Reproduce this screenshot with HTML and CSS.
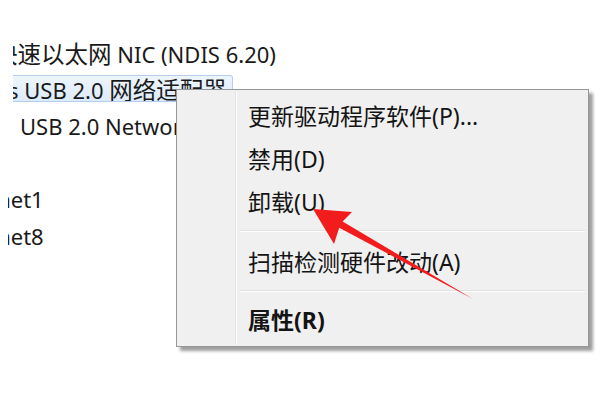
FILE: index.html
```html
<!DOCTYPE html>
<html lang="zh-CN">
<head>
<meta charset="utf-8">
<title>设备管理器</title>
<link rel="stylesheet" href="styles.css">
</head>
<body>
<div class="page">
  <div class="list">
    <div class="clip clip13">
      <div class="row"><span class="name shift1"><span class="cjk">快速以太网</span> NIC (NDIS 6.20)</span></div>
      <div class="row"><span class="sel"><span class="name shift2">s USB 2.0 <span class="cjk">网络适配器</span></span></span></div>
      <div class="row"><span class="name indent3">USB 2.0 Network Adapter</span></div>
      <div class="row"></div>
    </div>
    <div class="clip clip8">
      <div class="row"><span class="name shift5">VMnet1</span></div>
      <div class="row"><span class="name shift5">VMnet8</span></div>
    </div>
  </div>

  <div class="menu">
    <div class="gutter"></div>
    <div class="items">
      <div class="item">更新驱动程序软件(P)...</div>
      <div class="item">禁用(D)</div>
      <div class="item">卸载(U)</div>
      <div class="sep"></div>
      <div class="item">扫描检测硬件改动(A)</div>
      <div class="sep"></div>
      <div class="item item-last bold">属性(R)</div>
    </div>
  </div>

  <svg class="arrow" width="600" height="404" viewBox="0 0 600 404">
    <polygon points="313,209 352,212 342.6,221.5 473,299 339.2,227.7 334,244" fill="#f21c1c"/>
  </svg>
</div>
</body>
</html>
```

FILE: styles.css
```css
html, body {
  margin: 0;
  padding: 0;
  background: #ffffff;
}

.page {
  position: relative;
  width: 600px;
  height: 404px;
  overflow: hidden;
  background: #ffffff;
  font-family: "Noto Sans", "Noto Sans CJK SC", sans-serif;
  color: #1a1a1a;
}

.list {
  padding-top: 35px;
  display: flex;
  flex-direction: column;
}

.clip {
  overflow: hidden;
  display: flex;
  flex-direction: column;
}

.clip13 {
  margin-left: 13px;
}

.clip8 {
  margin-left: 8px;
}

.row {
  height: 36.5px;
  display: flex;
  align-items: center;
  font-size: 22px;
  white-space: nowrap;
}

.name {
  white-space: nowrap;
}

.cjk {
  font-size: 23.5px;
}

.shift1 {
  margin-left: -19px;
}

.shift2 {
  margin-left: -5px;
}

.indent3 {
  margin-left: 7px;
}

.shift5 {
  margin-left: -44px;
}

.sel {
  display: flex;
  align-items: center;
  box-sizing: border-box;
  height: 27px;
  width: 220px;
  margin-top: -2px;
  overflow: hidden;
  background: linear-gradient(#eef5fd, #dcebfb);
  border: 1px solid #b4cfee;
  border-left: none;
  border-radius: 0 3px 3px 0;
}

.menu {
  position: absolute;
  left: 176px;
  top: 89px;
  width: 413px;
  height: 258px;
  box-sizing: border-box;
  background: #f0f0f0;
  border: 1px solid #979797;
  box-shadow: 4px 4px 3px rgba(0, 0, 0, 0.38);
  display: flex;
  font-family: "Noto Sans", "Noto Sans CJK SC", sans-serif;
  font-size: 23px;
  color: #141414;
}

.gutter {
  width: 56px;
  flex: none;
  border-right: 1px solid #e2e3e3;
  box-shadow: 1px 0 0 #ffffff;
  margin: 2px 0 2px 2px;
}

.items {
  flex: 1;
  display: flex;
  flex-direction: column;
  padding: 3px 3px 0 4px;
}

.item {
  height: 43px;
  display: flex;
  align-items: center;
  padding-left: 8px;
  white-space: nowrap;
}

.item-last {
  height: 40px;
}

.bold {
  font-weight: bold;
}

.sep {
  height: 17px;
  box-sizing: border-box;
  padding-top: 8px;
}

.sep::before {
  content: "";
  display: block;
  height: 1px;
  background: #e0e0e0;
  border-bottom: 1px solid #ffffff;
}

.arrow {
  position: absolute;
  left: 0;
  top: 0;
  pointer-events: none;
}
```
